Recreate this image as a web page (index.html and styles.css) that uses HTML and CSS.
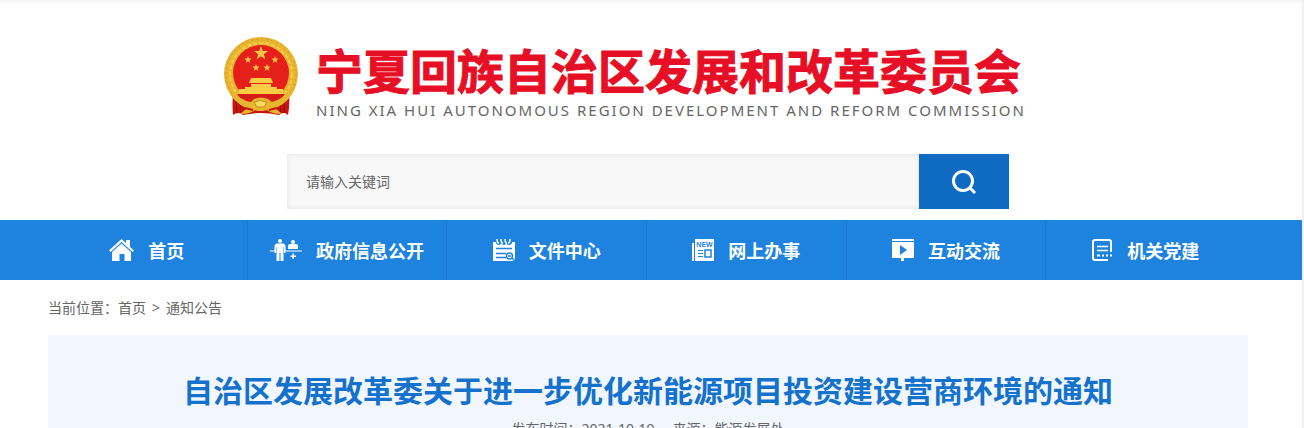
FILE: index.html
```html
<!DOCTYPE html>
<html lang="zh-CN">
<head>
    <meta charset="utf-8">
    <meta name="viewport" content="width=device-width, initial-scale=1">
    <title>宁夏回族自治区发展和改革委员会</title>
    <link rel="stylesheet" href="styles.css">
</head>
<body>
    <header class="header">
        <a class="logo" href="#">
            <svg class="emblem" viewBox="0 0 76 81" aria-hidden="true">
                <path d="M10 56Q9 70 10 79q5-4 10 0 18-4 36 0 5-4 9 0 2-9 1-23z" fill="#c9150f"/>
                <path d="M13 61l1 16M17 66l1 11M62 61l-1 16M58 66l-1 11" stroke="#8e0b0b" fill="none"/>
                <circle cx="38" cy="38" r="37" fill="#e8b52f"/>
                <circle cx="38" cy="38" r="35" fill="none" stroke="#d49a22" stroke-dasharray="2 3"/>
                <circle cx="38" cy="38" r="31" fill="none" stroke="#f3cd52" stroke-width="2" stroke-dasharray="4 2"/>
                <circle cx="38" cy="37" r="28" fill="#e5201b"/>
                <path d="M38 10l1.800 5h5.200l-4.200 3.200 1.600 5.300-4.400-3.200-4.400 3.200 1.600-5.300L31 15h5.200z" fill="#f3c544"/>
                <path id="star" d="M25 20l1 2.500h2.700l-2.200 1.700.8 2.800-2.300-1.700-2.300 1.700.8-2.800-2.200-1.700H24z" fill="#f3c544"/>
                <use href="#star" x="27"/>
                <use href="#star" x="8" y="8"/>
                <use href="#star" x="19" y="8"/>
                <path d="M28 42h20l2 5H26zM28 48h20v3h6v3H22v-3h6z" fill="#f8cc45"/>
                <path d="M16 53h44v5H16z" fill="#f8cc45"/>
                <path d="M14 58h48l-6 9q-18 7-36 0z" fill="#d71b16"/>
                <path d="M10 54q6 10 18 12l3-3q7-3 14 0l4 3q11-3 17-12l2 4q-5 11-17 13l8 7q-12 0-16-5-5 4-10 0-4 5-16 5l9-7Q14 69 8 58z" fill="#e8b52f"/>
                <path d="M31 66q6-3 13 0l-3 5h-7z" fill="#f9da61" stroke="#cc8c18"/>
                <path d="M22 72l8 2M54 72l-8 2" stroke="#c9150f" stroke-width="2"/>
            </svg>
            <span class="logo-text">
                <span class="logo-name">宁夏回族自治区发展和改革委员会</span>
                <span class="logo-en">NING XIA HUI AUTONOMOUS REGION DEVELOPMENT AND REFORM COMMISSION</span>
            </span>
        </a>
        <form class="search">
            <input class="search-input" type="text" placeholder="请输入关键词" aria-label="请输入关键词">
            <button class="search-button" type="button" aria-label="搜索">
                <svg width="26" height="26" viewBox="0 0 26 26" fill="none" stroke="#fff" stroke-width="3" aria-hidden="true">
                    <circle cx="12" cy="12" r="9.500"/>
                    <path d="M18 18l6 6"/>
                </svg>
            </button>
        </form>
    </header>

    <nav class="nav">
        <ul class="nav-list">
            <li><a href="#">
                <svg width="25" height="22" viewBox="0 0 25 22" fill="#fff" aria-hidden="true">
                    <path d="M0 11.500L12.500 0 17 4V1h4v7l4 3.500-1.500 1.500L12.500 3 1.500 13z"/>
                    <path d="M3 13l9.500-8.500L22 13v9h-6.500v-7h-5v7H3z"/>
                </svg>
                <span>首页</span>
            </a></li>
            <li><a href="#">
                <svg width="32" height="22" viewBox="0 0 32 22" fill="#fff" aria-hidden="true">
                    <circle cx="10" cy="2" r="2"/>
                    <path d="M6 4.500h8l1.500 2V14H14V8h-.5v14h-3v-8h-1v8h-3V8H6v6H4.500V6.500z"/>
                    <path d="M0 11.500h5v1H0zM15 11.500h17v1H15zM18 7q0-2 2-2h6q2 0 2 2v3H18z"/>
                    <circle cx="23" cy="3" r="2"/>
                    <path d="M22.500 14.500h1.500v2h2V18h-2v2h-1.500v-2h-2v-1.500h2z"/>
                </svg>
                <span>政府信息公开</span>
            </a></li>
            <li><a href="#">
                <svg width="22" height="22" viewBox="0 0 22 22" aria-hidden="true">
                    <path d="M0 3h3q0 3 3 3 2 0 2-2 1 2 3 2 2 0 2-2 1 2 3 2 3 0 3-3h3v19H0z" fill="#fff"/>
                    <path d="M4 0q0 4 2 4M8 0q0 4 2 4M12 0q0 4 2 4M17 0q0 4-2 4" stroke="#fff" stroke-width="1.500" fill="none"/>
                    <path d="M3 9.500h16M3 14.500h10M3 18.500h10" stroke="#1e82df" stroke-width="1.500"/>
                    <circle cx="16.500" cy="17" r="3" fill="#fff" stroke="#1e82df" stroke-width="1.500"/>
                    <path d="M15 17h3M19 19l3 3" stroke="#1e82df" stroke-width="1.500"/>
                </svg>
                <span>文件中心</span>
            </a></li>
            <li><a href="#">
                <svg width="22" height="22" viewBox="0 0 22 22" aria-hidden="true">
                    <path d="M0 4h2v18H0zM3 0h19v22H3z" fill="#fff"/>
                    <text class="icon-new" x="12.500" y="8" text-anchor="middle">NEW</text>
                    <path d="M6 11.500h5M6 14.500h5M6 17.500h5" stroke="#1e82df"/>
                    <path d="M13 11h6v7h-6z" fill="none" stroke="#1e82df" stroke-width="1.500"/>
                </svg>
                <span>网上办事</span>
            </a></li>
            <li><a href="#">
                <svg width="22" height="22" viewBox="0 0 22 22" fill="#fff" aria-hidden="true">
                    <path d="M0 0h22v2H0zM0 3h22v16H12v3H9v-3H0z"/>
                    <path d="M8 6l7 5-7 5z" fill="#1e82df"/>
                </svg>
                <span>互动交流</span>
            </a></li>
            <li><a href="#">
                <svg width="21" height="22" viewBox="0 0 21 22" fill="none" stroke="#fff" stroke-width="2" aria-hidden="true">
                    <path d="M19 13V3q0-2-2-2H3Q1 1 1 3v16q0 2 2 2h13"/>
                    <path d="M5 7.500h11M5 11.500h11" stroke-width="1.500"/>
                    <path d="M5 16.500h3M10 16.500h2M14 16.500h2M18 16.500h2"/>
                </svg>
                <span>机关党建</span>
            </a></li>
        </ul>
    </nav>

    <main class="content">
        <div class="breadcrumb">
            <span>当前位置：<a href="#">首页</a></span>
            <span>&gt;</span>
            <a href="#">通知公告</a>
        </div>
        <article class="article">
            <h1>自治区发展改革委关于进一步优化新能源项目投资建设营商环境的通知</h1>
            <p class="meta"><span>发布时间：2021-10-19</span><span>来源：能源发展处</span></p>
        </article>
    </main>
</body>
</html>
```
FILE: styles.css
```css
* {
    box-sizing: border-box;
}
html {
    height: 100%;
    overflow: hidden;
}
body {
    min-height: 100%;
    margin: 0;
    border-right: 2px solid #f0f0f0;
    font: 14px/20px "Noto Sans", "Noto Sans CJK SC", sans-serif;
    color: #666;
    background: #fff;
}
a {
    color: inherit;
    text-decoration: none;
}

.header {
    display: flex;
    flex-direction: column;
    align-items: center;
    height: 220px;
    padding: 36px 6px 0 0;
    background: linear-gradient(#f5f5f5, #fff 6px);
}
.logo {
    display: flex;
    gap: 17px;
    width: 850px;
    max-width: 100%;
    height: 82px;
}
.emblem {
    flex: none;
    width: 76px;
    height: 81px;
}
.logo-text {
    white-space: nowrap;
}
.logo-name {
    display: block;
    padding-top: 3px;
    font: bold 47px/60px "Noto Sans CJK SC", sans-serif;
    color: #e60f25;
    -webkit-text-stroke: 1px #e60f25;
}
.logo-en {
    display: block;
    font-size: 15px;
    line-height: 22px;
    letter-spacing: 2px;
}

.search {
    display: flex;
    width: 722px;
    max-width: 100%;
    height: 55px;
    margin-top: 36px;
}
.search-input {
    flex: 1;
    min-width: 0;
    padding: 0 19px;
    border: 0;
    background: #f8f8f8;
    box-shadow: inset 0 0 5px #e2e2e2;
    font: inherit;
    color: #666;
}
.search-input::placeholder {
    color: #666;
    opacity: 1;
}
.search-button {
    display: flex;
    align-items: center;
    justify-content: center;
    width: 90px;
    padding: 0;
    border: 0;
    background: #0f6bc1;
}

.nav {
    padding-right: 10px;
    background: #1e82df;
}
.nav-list {
    display: grid;
    grid-template-columns: repeat(6, 1fr);
    max-width: 1198px;
    margin: 0 auto;
    padding: 0;
    list-style: none;
}
.nav-list li + li {
    border-left: 1px solid #1b77d0;
}
.nav-list a {
    display: flex;
    align-items: center;
    justify-content: center;
    gap: 14px;
    height: 60px;
    font: bold 18px/24px "Noto Sans CJK SC", sans-serif;
    color: #fff;
    white-space: nowrap;
}
.nav-list svg {
    flex: none;
}
.icon-new {
    font: bold 7px "Liberation Sans", sans-serif;
    fill: #1e82df;
}

.content {
    padding-right: 6px;
}
.breadcrumb,
.article {
    max-width: 1200px;
    margin: 0 auto;
}
.breadcrumb {
    display: flex;
    gap: 6px;
    padding: 18px 0 17px;
}
.article {
    padding: 33px 20px;
    background: #f2f7ff;
    text-align: center;
}
.article h1 {
    margin: 0;
    font: bold 30px/42px "Noto Sans CJK SC", sans-serif;
    color: #1472cc;
}
.meta {
    display: flex;
    justify-content: center;
    gap: 18px;
    margin: 9px 0 0;
}
```
